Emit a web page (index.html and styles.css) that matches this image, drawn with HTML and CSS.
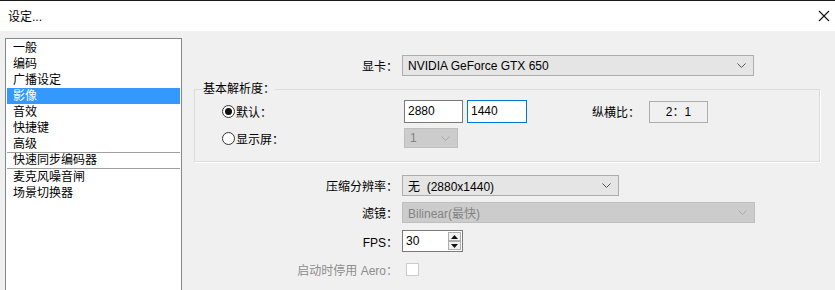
FILE: index.html
```html
<!DOCTYPE html>
<html>

<head>
    <title>设定...</title>
    <link rel="stylesheet" href="styles.css">
</head>

<body>
    <div class="titlebar">
        <span class="title">设定...</span>
        <svg class="close" width="12" height="12" viewBox="0 0 12 12">
            <path d="M1 1 L11 11 M11 1 L1 11" stroke="#111" stroke-width="1.1" fill="none" />
        </svg>
    </div>

    <div class="main">
        <ul class="nav">
            <li>一般</li>
            <li>编码</li>
            <li>广播设定</li>
            <li class="active">影像</li>
            <li>音效</li>
            <li>快捷键</li>
            <li>高级</li>
            <li class="sep">快速同步编码器</li>
            <li>麦克风噪音闸</li>
            <li>场景切换器</li>
        </ul>

        <div class="panel">
            <div class="row row-gpu">
                <span class="lbl">显卡：</span>
                <div class="combo w-wide">
                    <span>NVIDIA GeForce GTX 650</span>
                    <svg class="chev" width="9" height="5" viewBox="0 0 9 5"><path d="M0.5 0.5 L4.5 4.5 L8.5 0.5" stroke="#555" fill="none" /></svg>
                </div>
            </div>

            <fieldset class="group">
                <legend>基本解析度：</legend>
                <div class="grow grow-1">
                    <span class="opt"><span class="radio checked"></span>默认：</span>
                    <div class="edit">2880</div>
                    <div class="edit focus">1440</div>
                    <span class="ratio-lbl">纵横比：</span>
                    <div class="ratio">2：1</div>
                </div>
                <div class="grow grow-2">
                    <span class="opt"><span class="radio"></span>显示屏：</span>
                    <div class="combo disabled w-mon">
                        <span>1</span>
                        <svg class="chev" width="9" height="5" viewBox="0 0 9 5"><path d="M0.5 0.5 L4.5 4.5 L8.5 0.5" stroke="#a8a8a8" fill="none" /></svg>
                    </div>
                </div>
            </fieldset>

            <div class="row row-scale">
                <span class="lbl">压缩分辨率：</span>
                <div class="combo w-scale">
                    <span>无&nbsp; (2880x1440)</span>
                    <svg class="chev" width="9" height="5" viewBox="0 0 9 5"><path d="M0.5 0.5 L4.5 4.5 L8.5 0.5" stroke="#555" fill="none" /></svg>
                </div>
            </div>

            <div class="row row-filter">
                <span class="lbl">滤镜：</span>
                <div class="combo disabled w-filter">
                    <span>Bilinear(最快)</span>
                    <svg class="chev" width="9" height="5" viewBox="0 0 9 5"><path d="M0.5 0.5 L4.5 4.5 L8.5 0.5" stroke="#a8a8a8" fill="none" /></svg>
                </div>
            </div>

            <div class="row row-fps">
                <span class="lbl">FPS：</span>
                <div class="spin">
                    <span>30</span>
                    <div class="spin-btns">
                        <div class="spin-btn"><svg width="7" height="4" viewBox="0 0 7 4"><path d="M3.5 0 L7 4 L0 4 Z" fill="#111" /></svg></div>
                        <div class="spin-btn"><svg width="7" height="4" viewBox="0 0 7 4"><path d="M0 0 L7 0 L3.5 4 Z" fill="#111" /></svg></div>
                    </div>
                </div>
            </div>

            <div class="row row-aero">
                <span class="lbl muted">启动时停用 Aero：</span>
                <span class="check"></span>
            </div>
        </div>
    </div>
</body>

</html>
```

FILE: styles.css
```css
* {
    box-sizing: border-box;
}

body {
    margin: 0;
    height: 290px;
    background-color: #f0f0f0;
    font-family: "Liberation Sans", "Noto Sans CJK SC", sans-serif;
    font-size: 12px;
    color: #000;
    overflow: hidden;
}

.titlebar {
    height: 31px;
    background-color: #fff;
    border-top: 1px solid #1b1b1b;
    display: flex;
    align-items: center;
    justify-content: space-between;
    padding: 0 5px 1px 8px;
}

.main {
    display: flex;
    align-items: flex-start;
}

/* left list */
.nav {
    list-style: none;
    margin: 7px 0 0 5px;
    padding: 1px;
    width: 177px;
    height: 252px;
    background-color: #fff;
    border: 1px solid #828790;
    border-bottom: none;
}

.nav li {
    height: 16px;
    line-height: 16px;
    padding-left: 6px;
}

.nav li.active {
    background-color: #3399ff;
    color: #fff;
}

.nav li.sep {
    height: 17px;
    line-height: 15px;
    border-top: 1px solid #a0a0a0;
    border-bottom: 1px solid #a0a0a0;
}

/* right side */
.panel {
    padding-top: 24px;
    width: 650px;
}

.row {
    display: flex;
    align-items: center;
}

.lbl {
    width: 216px;
    margin-right: 4px;
    text-align: right;
    white-space: nowrap;
}

.muted {
    color: #8d8d8d;
}

.combo {
    height: 21px;
    display: flex;
    align-items: center;
    justify-content: space-between;
    padding: 0 7px 0 5px;
    background-color: #e5e5e5;
    border: 1px solid #adadad;
}

.combo.disabled {
    background-color: #cccccc;
    border-color: #bfbfbf;
    color: #838383;
}

.w-wide {
    width: 352px;
}

.w-mon {
    width: 54px;
    height: 20px;
}

.w-scale {
    width: 217px;
}

.w-filter {
    width: 353px;
}

.row-scale {
    margin-top: 13px;
}

.row-filter {
    margin-top: 6px;
}

.row-fps {
    margin-top: 7px;
}

.row-aero {
    margin-top: 9px;
}

/* group box */
.group {
    margin: 5px 0 0 12px;
    width: 626px;
    padding: 0 8px 13px 8px;
    border: 1px solid #dcdcdc;
    box-shadow: 1px 1px 0 #fff;
}

.group legend {
    padding: 0;
    line-height: 16px;
}

.grow {
    display: flex;
    align-items: center;
    margin-left: 19px;
}

.grow-1 {
    margin-top: 3px;
    height: 23px;
}

.grow-2 {
    margin-top: 5px;
    height: 20px;
}

.opt {
    width: 182px;
    display: flex;
    align-items: center;
}

.radio {
    width: 13px;
    height: 13px;
    border: 1px solid #333;
    border-radius: 50%;
    background-color: #fff;
    margin-right: 1px;
    position: relative;
}

.radio.checked::after {
    content: "";
    position: absolute;
    left: 2px;
    top: 2px;
    width: 7px;
    height: 7px;
    border-radius: 50%;
    background-color: #111;
}

.edit {
    width: 59px;
    height: 23px;
    line-height: 21px;
    padding-left: 3px;
    background-color: #fff;
    border: 1px solid #7a7a7a;
    margin-right: 4px;
}

.edit.focus {
    width: 60px;
    border-color: #0078d7;
}

.ratio-lbl {
    width: 109px;
    text-align: right;
    margin-right: 9px;
}

.ratio {
    width: 59px;
    height: 22px;
    line-height: 20px;
    text-align: center;
    border: 1px solid #adadad;
    background-color: #f0f0f0;
}

/* spinner */
.spin {
    width: 61px;
    height: 22px;
    display: flex;
    align-items: center;
    justify-content: space-between;
    padding: 0 1px 0 3px;
    background-color: #fff;
    border: 1px solid #7a7a7a;
}

.spin-btns {
    display: flex;
    flex-direction: column;
}

.spin-btn {
    width: 13px;
    height: 9px;
    display: flex;
    align-items: center;
    justify-content: center;
    background-color: #f0f0f0;
    border: 1px solid #adadad;
}

.check {
    width: 13px;
    height: 13px;
    margin-left: 4px;
    background-color: #fff;
    border: 1px solid #cccccc;
}
```
